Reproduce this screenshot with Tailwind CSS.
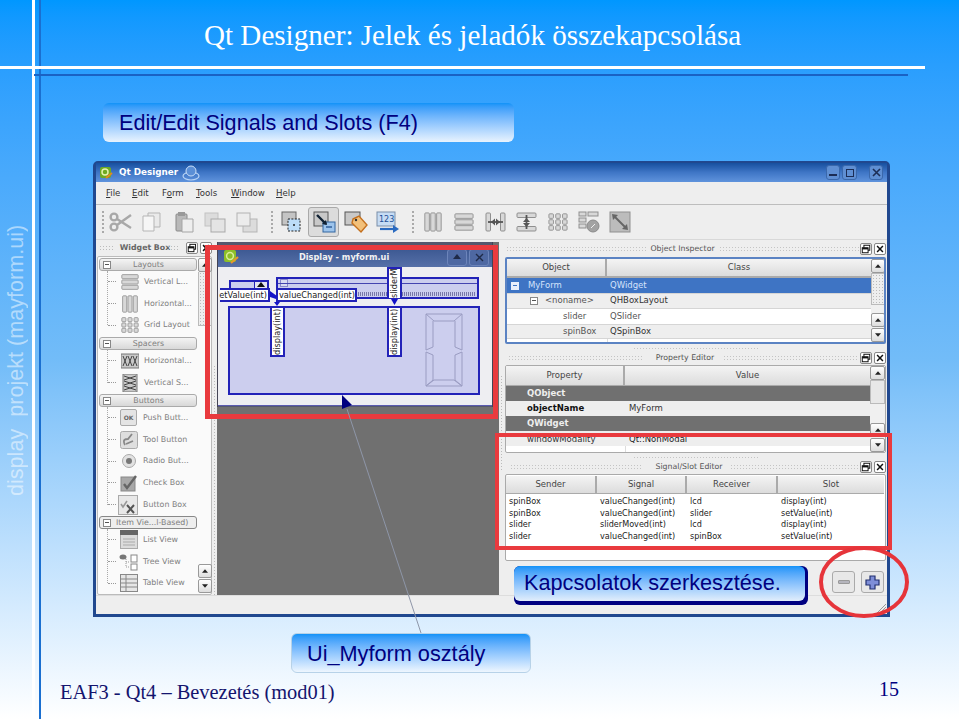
<!DOCTYPE html>
<html lang="hu">
<head>
<meta charset="utf-8">
<title>Qt Designer</title>
<script src="https://cdn.jsdelivr.net/npm/@tailwindcss/browser@4"></script>
</head>
<body class="m-0">
<svg width="0" height="0" class="absolute">
  <defs>
    <symbol id="vl" viewBox="0 0 22 22"><g fill="#d8d8d8" stroke="#8f8f8f"><rect x="1" y="2" width="20" height="5" rx="1"/><rect x="1" y="8.5" width="20" height="5" rx="1"/><rect x="1" y="15" width="20" height="5" rx="1"/></g></symbol>
    <symbol id="hl" viewBox="0 0 22 22"><g fill="#d8d8d8" stroke="#8f8f8f"><rect x="2" y="1" width="5" height="20" rx="1"/><rect x="8.5" y="1" width="5" height="20" rx="1"/><rect x="15" y="1" width="5" height="20" rx="1"/></g></symbol>
    <symbol id="gl" viewBox="0 0 22 22"><g fill="#d8d8d8" stroke="#8f8f8f"><rect x="1" y="2" width="5" height="5" rx="1"/><rect x="8.5" y="2" width="5" height="5" rx="1"/><rect x="16" y="2" width="5" height="5" rx="1"/><rect x="1" y="8.5" width="5" height="5" rx="1"/><rect x="8.5" y="8.5" width="5" height="5" rx="1"/><rect x="16" y="8.5" width="5" height="5" rx="1"/><rect x="1" y="15" width="5" height="5" rx="1"/><rect x="8.5" y="15" width="5" height="5" rx="1"/><rect x="16" y="15" width="5" height="5" rx="1"/></g></symbol>
    <symbol id="up" viewBox="0 0 14 14"><polygon points="3.5,9 10.5,9 7,5" fill="#222"/></symbol>
    <symbol id="dn" viewBox="0 0 14 14"><polygon points="3.5,5 10.5,5 7,9" fill="#222"/></symbol>
    <symbol id="fl" viewBox="0 0 12 12"><rect x="3.5" y="1.5" width="7" height="6" fill="#fff" stroke="#111" stroke-width="1.2"/><rect x="1.5" y="4.5" width="7" height="6" fill="#fff" stroke="#111" stroke-width="1.2"/><rect x="1.5" y="4.5" width="7" height="2" fill="#111"/></symbol>
    <symbol id="xx" viewBox="0 0 12 12"><path d="M2.5 2.5L9.5 9.5M9.5 2.5L2.5 9.5" stroke="#111" stroke-width="1.8"/></symbol>
  </defs>
</svg>

<div class="relative w-[959px] h-[719px] overflow-hidden bg-linear-to-b from-[#0097ff] via-[#72bcf8] via-50% to-[#ffffff] font-['Liberation_Sans',sans-serif]">

  <!-- slide rules -->
  <div class="absolute left-[32px] top-0 w-[3px] h-[719px] bg-white"></div>
  <div class="absolute left-[39px] top-0 w-[2px] h-[719px] bg-[#1a6fd0]"></div>
  <div class="absolute left-0 top-[66px] w-[925px] h-[3px] bg-white"></div>
  <div class="absolute left-[34px] top-[74px] w-[874px] h-[2px] bg-[#1a62c4]"></div>

  <div class="absolute left-[204px] top-[17px] font-['Liberation_Serif',serif] text-[29.100px] leading-[36px] text-white whitespace-nowrap">Qt Designer: Jelek és jeladók összekapcsolása</div>

  <div class="absolute left-[4px] top-[224px] h-[272px] flex items-center [writing-mode:vertical-rl] rotate-180 text-[21.600px] leading-[24px] text-white/50 whitespace-nowrap">display&nbsp; projekt (mayform.ui)</div>

  <div class="absolute left-[103px] top-[103px] w-[411px] h-[39px] rounded-[6px] bg-linear-to-b from-[#0e93f8] to-[#e9f3fd] pl-[16px] pt-[2px] flex items-center text-[21.600px] text-[#000080] whitespace-nowrap">Edit/Edit Signals and Slots (F4)</div>

  <!-- Qt Designer window -->
  <div class="absolute left-[93px] top-[161px] w-[797px] h-[456px] border-x-[3px] border-b-[3px] border-t-[2px] border-[#20488f] rounded-t-[5px] flex flex-col bg-[#eeeeee] font-['DejaVu_Sans',sans-serif] text-[#555]">
    <!-- title bar -->
    <div class="h-[19px] flex items-center bg-linear-to-b from-[#16509f] via-[#3f76c6] to-[#5f93dc] relative shrink-0">
      <svg width="14" height="14" viewBox="0 0 14 14" class="ml-[3px]"><rect x="1" y="1" width="11" height="11" rx="2" fill="#6faa22"/><circle cx="6" cy="6" r="3" fill="none" stroke="#e5f2b0" stroke-width="1.5"/><path d="M7 12L13 7" stroke="#e08a20" stroke-width="2"/></svg>
      <span class="ml-[6px] text-[8.800px] font-bold text-white whitespace-nowrap">Qt Designer</span>
      <svg width="18" height="18" viewBox="0 0 18 18" class="ml-[4px]"><ellipse cx="9" cy="12" rx="8" ry="4" fill="none" stroke="#b9d4f5" stroke-width="1.2"/><circle cx="9" cy="7" r="5" fill="#5b8fd6" stroke="#c9def8"/></svg>
      <div class="ml-auto mr-[4px] flex items-center">
        <div class="w-[14px] h-[15px] rounded-[3px] bg-[#5f8fd3] border border-[#3a68ab] flex items-end justify-center pb-[3px]"><div class="w-[8px] h-[2px] bg-[#1c2d55]"></div></div>
        <div class="ml-[2px] w-[15px] h-[15px] rounded-[3px] bg-[#5f8fd3] border border-[#3a68ab] flex items-center justify-center"><div class="w-[8px] h-[8px] border border-[#1c2d55]"></div></div>
        <div class="ml-[12px] w-[14px] h-[15px] rounded-[3px] bg-[#5f8fd3] border border-[#3a68ab] flex items-center justify-center"><svg width="9" height="9" viewBox="0 0 9 9"><path d="M1 1L8 8M8 1L1 8" stroke="#1c2d55" stroke-width="1.6"/></svg></div>
      </div>
    </div>
    <!-- menu -->
    <div class="h-[23px] flex items-center pl-[10px] pt-[1px] text-[8.600px] text-[#333] border-b border-[#bdbdbd] shrink-0 bg-[#eeeeee]">
      <span class="w-[26px]"><u>F</u>ile</span>
      <span class="w-[30px]"><u>E</u>dit</span>
      <span class="w-[34px]">F<u>o</u>rm</span>
      <span class="w-[35px]"><u>T</u>ools</span>
      <span class="w-[45px]"><u>W</u>indow</span>
      <span><u>H</u>elp</span>
    </div>
    <!-- toolbar -->
    <div class="h-[35px] flex items-center shrink-0 border-b border-[#d8d8d8] relative">
      <div class="ml-[5px] w-[4px] h-[24px] bg-[radial-gradient(#aaa_1px,transparent_1px)] bg-[length:4px_4px]"></div>
      <svg width="24" height="20" viewBox="0 0 24 20" class="ml-[4px]"><g fill="none" stroke="#a8a8a8" stroke-width="2.4"><circle cx="5" cy="5" r="3.4"/><circle cx="5" cy="15" r="3.4"/><path d="M8 7L22 16M8 13L22 3"/></g></svg>
      <svg width="22" height="22" viewBox="0 0 22 22" class="ml-[8px]"><path d="M7 2h12v14h-12z" fill="#eaeaea" stroke="#b5b5b5"/><path d="M2 5h11v15h-11z" fill="#f6f6f6" stroke="#b5b5b5"/></svg>
      <svg width="22" height="22" viewBox="0 0 22 22" class="ml-[10px]"><rect x="3" y="3" width="11" height="17" rx="1" fill="#b9b9b9" stroke="#8a8a8a"/><rect x="5" y="1" width="7" height="4" fill="#999"/><path d="M9 8h11v13h-11z" fill="#eeeeee" stroke="#a5a5a5"/></svg>
      <svg width="22" height="22" viewBox="0 0 22 22" class="ml-[9px]"><rect x="1" y="2" width="13" height="13" fill="#dcdcdc" stroke="#c2c2c2"/><rect x="7" y="8" width="14" height="13" fill="#e4e4e4" stroke="#a9a9a9"/></svg>
      <svg width="22" height="22" viewBox="0 0 22 22" class="ml-[10px]"><rect x="7" y="8" width="14" height="13" fill="#dcdcdc" stroke="#b5b5b5"/><rect x="1" y="2" width="13" height="13" fill="#ececec" stroke="#b2b2b2"/></svg>
      <div class="ml-[12px] w-[4px] h-[24px] bg-[radial-gradient(#aaa_1px,transparent_1px)] bg-[length:4px_4px]"></div>
      <svg width="22" height="22" viewBox="0 0 22 22" class="ml-[7px]"><rect x="1" y="1" width="14" height="13" fill="#c4c4c4" stroke="#666"/><rect x="7" y="8" width="12" height="12" fill="#bcdcf8" stroke="#222" stroke-dasharray="2 1.4"/><circle cx="13" cy="14" r="1" fill="#222"/></svg>
      <div class="ml-[5px] w-[31px] h-[30px] rounded-[3px] border border-[#a9a9a9] bg-[#dcdcdc] flex items-center justify-center">
        <svg width="24" height="24" viewBox="0 0 24 24"><rect x="2" y="2" width="14" height="14" fill="#c8c8c8" stroke="#555"/><rect x="11" y="12" width="12" height="10" fill="#9dc4ec" stroke="#3366a0"/><path d="M14 17h6" stroke="#2a5a96" stroke-width="1.4"/><path d="M5 5L14 14" stroke="#123" stroke-width="2.4"/><polygon points="15,15 10,14 14,10" fill="#123"/></svg>
      </div>
      <svg width="24" height="24" viewBox="0 0 24 24" class="ml-[5px]"><rect x="1" y="2" width="15" height="13" fill="#c8c8c8" stroke="#555"/><path d="M9 9l6-3 8 9-6 7-9-9z" fill="#f2c07a" stroke="#c4701e" stroke-width="1.4"/><circle cx="12" cy="10" r="1.2" fill="#333"/></svg>
      <svg width="24" height="24" viewBox="0 0 24 24" class="ml-[8px]"><rect x="1" y="2" width="18" height="14" fill="#c6dcf4" stroke="#7a8ea8"/><text x="3" y="12" font-size="8" fill="#1e4f96" font-family="DejaVu Sans">123</text><path d="M4 19h14" stroke="#2a6ac0" stroke-width="2.2"/><polygon points="17,15 23,19 17,23" fill="#2a6ac0"/></svg>
      <div class="ml-[11px] w-[4px] h-[24px] bg-[radial-gradient(#aaa_1px,transparent_1px)] bg-[length:4px_4px]"></div>
      <svg width="20" height="20" class="ml-[8px]"><use href="#hl"/></svg>
      <svg width="20" height="20" class="ml-[11px]"><use href="#vl"/></svg>
      <svg width="21" height="20" viewBox="0 0 21 20" class="ml-[11px]"><g fill="#d8d8d8" stroke="#8f8f8f"><rect x="1" y="1" width="4.5" height="18" rx="1"/><rect x="15.5" y="1" width="4.5" height="18" rx="1"/></g><path d="M3 10h15" stroke="#555" stroke-width="1.8"/><polygon points="6,10 10,6.5 10,13.5" fill="#555"/><polygon points="15,10 11,6.5 11,13.5" fill="#555"/></svg>
      <svg width="21" height="20" viewBox="0 0 21 20" class="ml-[10px]"><g fill="#d8d8d8" stroke="#8f8f8f"><rect x="1" y="1" width="19" height="4.5" rx="1"/><rect x="1" y="14.5" width="19" height="4.5" rx="1"/></g><path d="M10.5 3v14" stroke="#555" stroke-width="1.8"/><polygon points="10.5,6 7,10 14,10" fill="#555"/><polygon points="10.5,15 7,11 14,11" fill="#555"/></svg>
      <svg width="20" height="20" class="ml-[11px]"><use href="#gl"/></svg>
      <svg width="22" height="22" viewBox="0 0 22 22" class="ml-[10px]"><g fill="#d8d8d8" stroke="#8f8f8f"><rect x="1" y="1" width="7" height="4"/><rect x="10" y="1" width="10" height="4"/><rect x="1" y="7" width="7" height="4"/><rect x="1" y="13" width="7" height="4"/></g><circle cx="15" cy="15" r="6" fill="#a2a2a2" stroke="#8a8a8a"/><path d="M13 17l4-4" stroke="#eee"/></svg>
      <svg width="22" height="22" viewBox="0 0 22 22" class="ml-[9px]"><rect x="1" y="1" width="20" height="20" fill="#bcbcbc" stroke="#909090"/><path d="M5 5L17 17" stroke="#666" stroke-width="2"/><polygon points="3,3 9,4 4,9" fill="#666"/><polygon points="19,19 13,18 18,13" fill="#666"/></svg>
    </div>

    <!-- body -->
    <div class="flex h-[355px] shrink-0">
      <!-- widget box -->
      <div class="w-[116px] shrink-0 flex flex-col pl-[1px]">
        <div class="h-[16px] flex items-center text-[7.800px] text-[#444] shrink-0">
          <div class="ml-[2px] w-[14px] h-[6px] bg-[radial-gradient(#bbb_1px,transparent_1px)] bg-[length:3px_3px]"></div>
          <span class="ml-[7px] w-[44px] font-bold text-[#666] whitespace-nowrap">Widget Box</span>
          <div class="ml-[3px] w-[14px] h-[6px] bg-[radial-gradient(#bbb_1px,transparent_1px)] bg-[length:3px_3px]"></div>
          <svg width="12" height="12" class="ml-[6px] bg-white border border-[#888] rounded-[2px]"><use href="#fl"/></svg>
          <svg width="12" height="12" class="ml-[2px] bg-white border border-[#888] rounded-[2px]"><use href="#xx"/></svg>
        </div>
        <div class="h-[339px] flex border border-[#bbb] rounded-[2px] bg-[#fafafa] text-[7.900px] text-[#808080] p-[1px]">
          <div class="w-[98px] shrink-0">
            <!-- Layouts -->
            <div class="h-[13px] flex items-center rounded-[3px] border border-[#aaa] bg-linear-to-b from-[#f4f4f4] to-[#d8d8d8]"><span class="ml-[3px] w-[8px] h-[8px] border border-[#888] bg-white flex items-center justify-center"><span class="w-[4px] h-px bg-[#555]"></span></span><span class="flex-1 text-center mr-[10px]">Layouts</span></div>
            <div class="ml-[8px] border-l border-dotted border-[#aaa] h-[54px]">
              <div class="h-[21.7px] flex items-center"><span class="w-[8px] border-t border-dotted border-[#999]"></span><svg width="18" height="18" class="ml-[5px]"><use href="#vl"/></svg><span class="ml-[5px] whitespace-nowrap">Vertical L...</span></div>
              <div class="h-[21.7px] flex items-center"><span class="w-[8px] border-t border-dotted border-[#999]"></span><svg width="18" height="18" class="ml-[5px]"><use href="#hl"/></svg><span class="ml-[5px] whitespace-nowrap">Horizontal...</span></div>
              <div class="h-[21.7px] flex items-center"><span class="w-[8px] border-t border-dotted border-[#999]"></span><svg width="18" height="18" class="ml-[5px]"><use href="#gl"/></svg><span class="ml-[5px] whitespace-nowrap">Grid Layout</span></div>
            </div>
            <div class="h-[12px]"></div>
            <!-- Spacers -->
            <div class="h-[13px] flex items-center rounded-[3px] border border-[#aaa] bg-linear-to-b from-[#f4f4f4] to-[#d8d8d8]"><span class="ml-[3px] w-[8px] h-[8px] border border-[#888] bg-white flex items-center justify-center"><span class="w-[4px] h-px bg-[#555]"></span></span><span class="flex-1 text-center mr-[10px]">Spacers</span></div>
            <div class="ml-[8px] border-l border-dotted border-[#aaa] h-[33px]">
              <div class="h-[21.7px] flex items-center"><span class="w-[8px] border-t border-dotted border-[#999]"></span><svg width="18" height="16" viewBox="0 0 18 16" class="ml-[5px]"><rect x="0" y="1" width="18" height="14" fill="#c8c8c8" stroke="#777"/><path d="M2 3l4 10M6 3L2 13M7 3l4 10M11 3L7 13M12 3l4 10M16 3l-4 10" stroke="#444"/></svg><span class="ml-[5px] whitespace-nowrap">Horizontal...</span></div>
              <div class="h-[21.7px] flex items-center"><span class="w-[8px] border-t border-dotted border-[#999]"></span><svg width="16" height="18" viewBox="0 0 16 18" class="ml-[6px]"><rect x="1" y="0" width="14" height="18" fill="#c8c8c8" stroke="#777"/><path d="M2 2l12 4M14 2L2 6M2 7l12 4M14 7L2 11M2 12l12 4M14 12L2 16" stroke="#444"/></svg><span class="ml-[6px] whitespace-nowrap">Vertical S...</span></div>
            </div>
            <div class="h-[11px]"></div>
            <!-- Buttons -->
            <div class="h-[13px] flex items-center rounded-[3px] border border-[#aaa] bg-linear-to-b from-[#f4f4f4] to-[#d8d8d8]"><span class="ml-[3px] w-[8px] h-[8px] border border-[#888] bg-white flex items-center justify-center"><span class="w-[4px] h-px bg-[#555]"></span></span><span class="flex-1 text-center mr-[10px]">Buttons</span></div>
            <div class="ml-[8px] border-l border-dotted border-[#aaa] h-[98px]">
              <div class="h-[21.7px] flex items-center"><span class="w-[8px] border-t border-dotted border-[#999]"></span><span class="ml-[4px] w-[17px] h-[17px] rounded-[2px] border border-[#aaa] bg-[#e4e4e4] text-[6px] font-bold text-[#666] flex items-center justify-center">OK</span><span class="ml-[6px] whitespace-nowrap">Push Butt...</span></div>
              <div class="h-[21.7px] flex items-center"><span class="w-[8px] border-t border-dotted border-[#999]"></span><svg width="18" height="18" viewBox="0 0 18 18" class="ml-[4px]"><rect x="0.5" y="0.5" width="17" height="17" rx="2" fill="#dedede" stroke="#aaa"/><path d="M5 14C2 8 6 8 8 8L12 3M6 13L13 10" stroke="#888" stroke-width="1.8" fill="none"/></svg><span class="ml-[5px] whitespace-nowrap">Tool Button</span></div>
              <div class="h-[21.7px] flex items-center"><span class="w-[8px] border-t border-dotted border-[#999]"></span><svg width="16" height="16" viewBox="0 0 16 16" class="ml-[5px]"><circle cx="8" cy="8" r="6.5" fill="#e2e2e2" stroke="#aaa"/><circle cx="8" cy="8" r="3" fill="#777"/></svg><span class="ml-[6px] whitespace-nowrap">Radio But...</span></div>
              <div class="h-[21.7px] flex items-center"><span class="w-[8px] border-t border-dotted border-[#999]"></span><svg width="18" height="18" viewBox="0 0 18 18" class="ml-[4px]"><rect x="1" y="3" width="14" height="14" fill="#a8a8a8" stroke="#888"/><path d="M4 10l3 4 9-12" stroke="#666" stroke-width="2.4" fill="none"/></svg><span class="ml-[5px] whitespace-nowrap">Check Box</span></div>
              <div class="h-[21.7px] flex items-center"><span class="w-[8px] border-t border-dotted border-[#999]"></span><svg width="20" height="20" viewBox="0 0 20 20" class="ml-[2px]"><rect x="0.5" y="0.5" width="19" height="19" fill="#e8e8e8" stroke="#aaa"/><path d="M3 9l2 3 4-6" stroke="#999" stroke-width="1.6" fill="none"/><path d="M9 10l7 8M16 10l-7 8" stroke="#555" stroke-width="2"/></svg><span class="ml-[5px] whitespace-nowrap">Button Box</span></div>
            </div>
            <div class="h-[11px]"></div>
            <!-- Item views -->
            <div class="h-[13px] flex items-center rounded-[3px] border border-[#888] bg-[#eeeeee]"><span class="ml-[3px] w-[8px] h-[8px] border border-[#888] bg-white flex items-center justify-center"><span class="w-[4px] h-px bg-[#555]"></span></span><span class="ml-[5px] whitespace-nowrap">Item Vie...l-Based)</span></div>
            <div class="ml-[8px] border-l border-dotted border-[#aaa] h-[54px]">
              <div class="h-[21.7px] flex items-center"><span class="w-[8px] border-t border-dotted border-[#999]"></span><svg width="18" height="19" viewBox="0 0 18 19" class="ml-[4px]"><rect x="0.5" y="0.5" width="17" height="18" fill="#dcdcdc" stroke="#aaa"/><rect x="0" y="0" width="18" height="5" fill="#666"/><path d="M3 9h12M3 12h12M3 15h12" stroke="#aaa"/></svg><span class="ml-[5px] whitespace-nowrap">List View</span></div>
              <div class="h-[21.7px] flex items-center"><span class="w-[8px] border-t border-dotted border-[#999]"></span><svg width="20" height="18" viewBox="0 0 20 18" class="ml-[3px]"><ellipse cx="4" cy="4" rx="3.5" ry="2.5" fill="#777"/><path d="M7 6v8h4M7 9h4" stroke="#999" stroke-dasharray="1 1" fill="none"/><rect x="12" y="2" width="6" height="7" fill="#fff" stroke="#888"/><rect x="12" y="11" width="6" height="6" fill="#fff" stroke="#888"/></svg><span class="ml-[4px] whitespace-nowrap">Tree View</span></div>
              <div class="h-[21.7px] flex items-center"><span class="w-[8px] border-t border-dotted border-[#999]"></span><svg width="18" height="18" viewBox="0 0 18 18" class="ml-[4px]"><rect x="0.5" y="0.5" width="17" height="17" fill="#e6e6e6" stroke="#888"/><path d="M0 5h18M0 9h18M0 13h18M6 0v18" stroke="#888"/></svg><span class="ml-[5px] whitespace-nowrap">Table View</span></div>
            </div>
          </div>
          <!-- scrollbar -->
          <div class="w-[14px] ml-[1px] flex flex-col">
            <div class="w-[14px] h-[14px] rounded-[2px] border border-[#999] bg-linear-to-b from-white to-[#ddd] flex items-center justify-center"><svg width="12" height="12"><use href="#up"/></svg></div>
            <div class="w-[14px] h-[54px] border-x border-b border-[#bbb] bg-[radial-gradient(#bbb_1px,transparent_1px)] bg-[length:3px_3px] bg-[#eee]"></div>
            <div class="flex-1"></div>
            <div class="w-[14px] h-[14px] rounded-[2px] border border-[#999] bg-linear-to-b from-white to-[#ddd] flex items-center justify-center"><svg width="12" height="12"><use href="#up"/></svg></div>
            <div class="mt-[1px] w-[14px] h-[14px] rounded-[2px] border border-[#999] bg-linear-to-b from-white to-[#ddd] flex items-center justify-center"><svg width="12" height="12"><use href="#dn"/></svg></div>
          </div>
        </div>
      </div>
      <!-- splitter -->
      <div class="w-[5px] shrink-0 flex justify-center"><div class="mt-[125px] h-[230px] w-[3px] bg-[radial-gradient(#bbb_1px,transparent_1px)] bg-[length:3px_3px]"></div></div>

      <!-- MDI area -->
      <div class="w-[282px] shrink-0 bg-[#707070] relative mt-[2px]">
        <div class="absolute left-0 top-0 w-[276px] h-[165px] bg-[#55586e] border-x border-[#445] flex flex-col pt-[5px]">
          <div class="h-[20px] shrink-0 flex items-center relative bg-linear-to-b from-[#3a5690] to-[#5670a8]">
            <svg width="16" height="16" viewBox="0 0 16 16" class="ml-[5px]"><rect x="1" y="1" width="12" height="12" rx="2" fill="#8dbf28"/><circle cx="7" cy="7" r="3.4" fill="none" stroke="#d8ee9a" stroke-width="1.5"/><path d="M8 14L15 8" stroke="#e69a2a" stroke-width="2.2"/></svg>
            <span class="absolute left-[81px] text-[8.200px] font-bold text-[#f2f2f2] whitespace-nowrap">Display - myform.ui</span>
            <div class="ml-auto mr-[3px] flex gap-[2px]">
              <div class="w-[20px] h-[17px] rounded-[3px] bg-[#4e68a2] border border-[#6c84ba] flex items-center justify-center"><svg width="8" height="6" viewBox="0 0 8 6"><polygon points="0,5 8,5 4,0" fill="#1f2a48"/></svg></div>
              <div class="w-[20px] h-[17px] rounded-[3px] bg-[#4e68a2] border border-[#6c84ba] flex items-center justify-center"><svg width="9" height="9" viewBox="0 0 9 9"><path d="M1 1L8 8M8 1L1 8" stroke="#1f2a48" stroke-width="1.4"/></svg></div>
            </div>
          </div>
          <!-- form canvas with connection overlay -->
          <div class="h-[139px] shrink-0 bg-[#eeeef2] relative overflow-hidden border-b border-[#5a5ab0] text-[#222] text-[8.200px]">
            <!-- spinbox -->
            <div class="absolute left-[11px] top-[13px] w-[40px] h-[12px] bg-[#ccceee] border-[2px] border-[#2222b8] flex justify-end"><div class="w-[13px] bg-[#e4e4f0] border-l border-[#2222b8] flex justify-center"><svg width="8" height="6" viewBox="0 0 8 6"><polygon points="0,5 8,5 4,0" fill="#111"/></svg></div></div>
            <!-- slider -->
            <div class="absolute left-[58px] top-[10px] w-[203px] h-[22px] bg-[#ccceee] border-[2px] border-[#2222b8]">
              <div class="absolute left-[2px] top-0 w-[8px] h-[8px] bg-[#d8daf2] border border-[#8888cc]"></div>
              <div class="absolute left-[0px] top-[4px] w-[199px] h-px bg-[#4444b0]"></div>
              <div class="absolute left-[80px] top-[13px] w-[118px] h-[4px] bg-[repeating-linear-gradient(90deg,#7878a8_0,#7878a8_1px,transparent_1px,transparent_2px)]"></div>
            </div>
            <!-- central -->
            <div class="absolute left-[10px] top-[39px] w-[252px] h-[89px] bg-[#ccceee] border-[2px] border-[#2222b8]"></div>
            <!-- lcd -->
            <svg width="38" height="76" viewBox="0 0 38 76" class="absolute left-[207px] top-[45px]"><g fill="none" stroke="#9a9cc2"><path d="M1 2H37L29 9H9Z"/><path d="M1 2V38L8 35V9"/><path d="M37 2V38L30 35V9"/><path d="M1 40V74L8 68V43Z"/><path d="M37 40V74L30 68V43Z"/><path d="M1 74H37L29 68H9Z"/></g></svg>
            <!-- labels -->
            <div class="absolute left-[2px] top-[21px] w-[50px] h-[14px] bg-white border-[2px] border-[#2222b8] border-l-0 flex items-center justify-end pr-[1px] whitespace-nowrap">etValue(int)</div>
            <div class="absolute left-[58px] top-[21px] w-[81px] h-[14px] bg-white border-[2px] border-[#2222b8] flex items-center pl-[1px] whitespace-nowrap">valueChanged(int)</div>
            <div class="absolute left-[169px] top-0 w-[15px] h-[31px] bg-white border-[2px] border-t-0 border-[#2222b8] flex items-center justify-start [writing-mode:vertical-rl] rotate-180 overflow-hidden whitespace-nowrap">sliderM</div>
            <div class="absolute left-[52px] top-[39px] w-[15px] h-[51px] bg-white border-[2px] border-[#2222b8] flex items-center justify-center [writing-mode:vertical-rl] rotate-180 whitespace-nowrap">display(int)</div>
            <div class="absolute left-[169px] top-[39px] w-[15px] h-[51px] bg-white border-[2px] border-[#2222b8] flex items-center justify-center [writing-mode:vertical-rl] rotate-180 whitespace-nowrap">display(int)</div>
            <!-- connection arrows -->
            <svg width="276" height="60" viewBox="0 0 276 60" class="absolute left-0 top-0">
              <polygon points="52,24 59,29 58,32 52,30" fill="#1414c8"/>
              <polygon points="56,35 62,35 59,39" fill="#1414c8"/>
              <polygon points="173,32 180,32 176.500,38" fill="#1414c8"/>
            </svg>
          </div>
        </div>
      </div>
      <!-- splitter -->
      <div class="w-[5px] shrink-0 flex justify-center"><div class="mt-[135px] h-[95px] w-[3px] bg-[radial-gradient(#bbb_1px,transparent_1px)] bg-[length:3px_3px]"></div></div>

      <!-- right docks -->
      <div class="w-[383px] shrink-0 pl-[1px] pr-[1px] flex flex-col text-[8.500px]">
        <!-- Object inspector -->
        <div class="h-[17px] flex items-center shrink-0 text-[#555]">
          <div class="ml-[1px] w-[140px] h-[5px] bg-[radial-gradient(#c4c4c4_1px,transparent_1px)] bg-[length:3px_3px]"></div>
          <span class="w-[67px] text-center ml-[3px] text-[7.800px] whitespace-nowrap">Object Inspector</span>
          <div class="ml-[3px] w-[140px] h-[5px] bg-[radial-gradient(#c4c4c4_1px,transparent_1px)] bg-[length:3px_3px]"></div>
          <svg width="12" height="12" class="ml-auto bg-white border border-[#888] rounded-[2px]"><use href="#fl"/></svg>
          <svg width="12" height="12" class="ml-[2px] bg-white border border-[#888] rounded-[2px]"><use href="#xx"/></svg>
        </div>
        <div class="h-[87px] shrink-0 flex border-[2px] border-[#5b83c3] rounded-[2px] bg-white overflow-hidden">
          <div class="w-[364px] shrink-0 flex flex-col">
            <div class="h-[19px] flex shrink-0 text-[#444]">
              <div class="w-[100px] bg-linear-to-b from-[#f4f4f4] to-[#dcdcdc] border-r-[2px] border-b-[2px] border-[#aaa] flex items-center justify-center">Object</div>
              <div class="flex-1 bg-linear-to-b from-[#f4f4f4] to-[#dcdcdc] border-b-[2px] border-[#aaa] flex items-center justify-center">Class</div>
            </div>
            <div class="h-[15px] flex items-center bg-[#3e74c4] text-[#d5e3fb] shrink-0"><span class="ml-[4px] w-[8px] h-[8px] bg-[#e8eefb] flex items-center justify-center"><span class="w-[4px] h-px bg-[#3e74c4]"></span></span><span class="ml-[9px] w-[82px]">MyForm</span><span>QWidget</span></div>
            <div class="h-[15.500px] flex items-center bg-[#eeeeee] border-y border-[#d5d5d5] shrink-0"><span class="ml-[23px] w-[8px] h-[8px] border border-[#888] bg-white flex items-center justify-center"><span class="w-[4px] h-px bg-[#555]"></span></span><span class="ml-[7px] w-[65px]">&lt;noname&gt;</span><span class="text-[#333]">QHBoxLayout</span></div>
            <div class="h-[15px] flex items-center bg-white shrink-0"><span class="ml-[56px] w-[47px]">slider</span><span>QSlider</span></div>
            <div class="h-[15.500px] flex items-center bg-[#eeeeee] border-y border-[#d5d5d5] shrink-0"><span class="ml-[56px] w-[47px]">spinBox</span><span class="text-[#333]">QSpinBox</span></div>
            <div class="flex-1 ml-[100px] border-l border-[#ddd]"></div>
          </div>
          <div class="flex-1 flex flex-col bg-[#f0f0f0]">
            <div class="h-[14px] rounded-[2px] border border-[#999] bg-linear-to-b from-white to-[#ddd] flex items-center justify-center"><svg width="12" height="12"><use href="#up"/></svg></div>
            <div class="h-[32px] border border-[#bbb] bg-[radial-gradient(#bbb_1px,transparent_1px)] bg-[length:3px_3px] bg-[#eee]"></div>
            <div class="flex-1"></div>
            <div class="h-[14px] rounded-[2px] border border-[#999] bg-linear-to-b from-white to-[#ddd] flex items-center justify-center"><svg width="12" height="12"><use href="#up"/></svg></div>
            <div class="h-[14px] mt-[1px] rounded-[2px] border border-[#999] bg-linear-to-b from-white to-[#ddd] flex items-center justify-center"><svg width="12" height="12"><use href="#dn"/></svg></div>
          </div>
        </div>
        <div class="h-[6px] shrink-0 flex justify-center items-end"><div class="w-[125px] h-[3px] bg-[radial-gradient(#c4c4c4_1px,transparent_1px)] bg-[length:3px_3px]"></div></div>
        <!-- Property editor -->
        <div class="h-[15px] flex items-center shrink-0 text-[#555]">
          <div class="ml-[3px] w-[136px] h-[5px] bg-[radial-gradient(#c4c4c4_1px,transparent_1px)] bg-[length:3px_3px]"></div>
          <span class="w-[64px] text-center ml-[9px] text-[7.800px] whitespace-nowrap">Property Editor</span>
          <div class="ml-[6px] w-[135px] h-[5px] bg-[radial-gradient(#c4c4c4_1px,transparent_1px)] bg-[length:3px_3px]"></div>
          <svg width="12" height="12" class="ml-auto bg-white border border-[#888] rounded-[2px]"><use href="#fl"/></svg>
          <svg width="12" height="12" class="ml-[2px] bg-white border border-[#888] rounded-[2px]"><use href="#xx"/></svg>
        </div>
        <div class="h-[88px] shrink-0 flex border border-[#aaa] rounded-[2px] bg-white overflow-hidden">
          <div class="w-[364px] shrink-0 flex flex-col">
            <div class="h-[20px] flex shrink-0 text-[#444]">
              <div class="w-[119px] bg-linear-to-b from-[#f4f4f4] to-[#dcdcdc] border-r-[2px] border-b border-[#aaa] flex items-center justify-center">Property</div>
              <div class="flex-1 bg-linear-to-b from-[#f4f4f4] to-[#dcdcdc] border-b border-[#aaa] flex items-center justify-center">Value</div>
            </div>
            <div class="h-[15px] flex items-center bg-[#707070] text-[#eee] font-bold shrink-0"><span class="ml-[21px]">QObject</span></div>
            <div class="h-[15px] flex items-center bg-[#eeeeee] shrink-0"><span class="ml-[21px] w-[98px] font-bold text-[#111]">objectName</span><span class="text-[#333] ml-[4px]">MyForm</span></div>
            <div class="h-[15px] flex items-center bg-[#707070] text-[#eee] font-bold shrink-0"><span class="ml-[21px]">QWidget</span></div>
            <div class="h-[15px] flex items-center bg-[#eeeeee] shrink-0 pt-[2px]"><span class="ml-[21px] w-[98px] text-[#333]">windowModality</span><span class="text-[#222] ml-[4px]">Qt::NonModal</span></div>
            <div class="flex-1 ml-[119px] border-l border-[#ddd]"></div>
          </div>
          <div class="flex-1 flex flex-col bg-[#f0f0f0]">
            <div class="h-[14px] rounded-[2px] border border-[#999] bg-linear-to-b from-white to-[#ddd] flex items-center justify-center"><svg width="12" height="12"><use href="#up"/></svg></div>
            <div class="h-[24px] border border-[#bbb] bg-[#e8e8e8]"></div>
            <div class="flex-1"></div>
            <div class="h-[14px] rounded-[2px] border border-[#999] bg-linear-to-b from-white to-[#ddd] flex items-center justify-center"><svg width="12" height="12"><use href="#up"/></svg></div>
            <div class="h-[14px] mt-[1px] rounded-[2px] border border-[#999] bg-linear-to-b from-white to-[#ddd] flex items-center justify-center"><svg width="12" height="12"><use href="#dn"/></svg></div>
          </div>
        </div>
        <div class="h-[6px] shrink-0 flex justify-center items-end"><div class="w-[125px] h-[3px] bg-[radial-gradient(#c4c4c4_1px,transparent_1px)] bg-[length:3px_3px]"></div></div>
        <!-- Signal/Slot editor -->
        <div class="h-[15px] flex items-center shrink-0 text-[#555]">
          <div class="ml-[5px] w-[132px] h-[5px] bg-[radial-gradient(#c4c4c4_1px,transparent_1px)] bg-[length:3px_3px]"></div>
          <span class="w-[72px] text-center ml-[11px] text-[7.800px] whitespace-nowrap">Signal/Slot Editor</span>
          <div class="ml-[5px] w-[128px] h-[5px] bg-[radial-gradient(#c4c4c4_1px,transparent_1px)] bg-[length:3px_3px]"></div>
          <svg width="12" height="12" class="ml-auto bg-white border border-[#888] rounded-[2px]"><use href="#fl"/></svg>
          <svg width="12" height="12" class="ml-[2px] bg-white border border-[#888] rounded-[2px]"><use href="#xx"/></svg>
        </div>
        <div class="h-[87px] shrink-0 flex flex-col border border-[#aaa] rounded-[2px] bg-white overflow-hidden pt-[1px] pr-[1px]">
          <div class="grid grid-cols-[91px_90px_91px_1fr] h-[18px] shrink-0 text-[#444] border-b border-[#aaa]">
            <div class="bg-linear-to-b from-[#f4f4f4] to-[#dcdcdc] border-r-[2px] border-[#aaa] flex items-center justify-center">Sender</div>
            <div class="bg-linear-to-b from-[#f4f4f4] to-[#dcdcdc] border-r-[2px] border-[#aaa] flex items-center justify-center">Signal</div>
            <div class="bg-linear-to-b from-[#f4f4f4] to-[#dcdcdc] border-r-[2px] border-[#aaa] flex items-center justify-center">Receiver</div>
            <div class="bg-linear-to-b from-[#f4f4f4] to-[#dcdcdc] flex items-center justify-center">Slot</div>
          </div>
          <div class="grid grid-cols-[91px_90px_91px_1fr] auto-rows-[11.700px] pt-[1px] pl-[3px] text-[8.100px] text-[#222] leading-[12px]">
            <span>spinBox</span><span>valueChanged(int)</span><span>lcd</span><span>display(int)</span>
            <span>spinBox</span><span>valueChanged(int)</span><span>slider</span><span>setValue(int)</span>
            <span>slider</span><span>sliderMoved(int)</span><span>lcd</span><span>display(int)</span>
            <span>slider</span><span>valueChanged(int)</span><span>spinBox</span><span>setValue(int)</span>
          </div>
        </div>
        <div class="h-[34px] shrink-0 flex justify-end gap-[6px] pt-[10px] pr-[2px]">
          <div class="w-[23px] h-[22px] rounded-[3px] border border-[#aaa] bg-[#e8e8e8] flex items-center justify-center"><div class="w-[12px] h-[4px] rounded-[1px] bg-[#b5b5bd] border border-[#999]"></div></div>
          <div class="w-[23px] h-[22px] rounded-[3px] border border-[#aaa] bg-[#e8e8e8] flex items-center justify-center"><svg width="15" height="15" viewBox="0 0 15 15"><path d="M5 1h5v4h4v5h-4v4H5v-4H1V5h4z" fill="#7e8ed8" stroke="#223070" stroke-width="1.2"/></svg></div>
        </div>
      </div>
    </div>
    <!-- status bar -->
    <div class="flex-1 relative border-t border-[#ddd] bg-[#eeeeee]">
      <svg width="11" height="11" viewBox="0 0 11 11" class="absolute right-0 bottom-0"><path d="M10 1L1 10M10 4L4 10M10 7L7 10" stroke="#999"/></svg>
    </div>
  </div>

  <!-- overlays -->
  <div class="absolute left-[205px] top-[245px] w-[293px] h-[174px] border-[5px] border-[#e93a3e]"></div>
  <div class="absolute left-[495px] top-[433px] w-[397px] h-[117px] border-[4px] border-[#e93a3e]"></div>
  <svg width="92" height="74" viewBox="0 0 92 74" class="absolute left-[819px] top-[545px]"><ellipse cx="45" cy="37" rx="43" ry="34" fill="none" stroke="#e6343a" stroke-width="4"/></svg>

  <div class="absolute left-[514px] top-[566px] w-[294px] h-[39px] rounded-[6px] bg-[#000080] pr-[3px] pb-[4px]">
    <div class="h-full rounded-[6px] bg-linear-to-b from-[#0e93f8] to-[#e2eefb] pl-[10px] flex items-center text-[21.700px] text-[#000080] whitespace-nowrap">Kapcsolatok szerkesztése.</div>
  </div>

  <svg width="959" height="719" viewBox="0 0 959 719" class="absolute left-0 top-0 pointer-events-none">
    <path d="M347 409L421 633" stroke="#8e96a8" stroke-width="1"/>
    <polygon points="342,395 352,405 342,409" fill="#000080"/>
  </svg>

  <div class="absolute left-[291px] top-[633px] w-[240px] h-[40px] rounded-[6px] border border-[#b7d2e8] bg-linear-to-b from-[#0e93f8] to-[#eef6fe] pl-[15px] pt-[2px] flex items-center text-[21.700px] text-[#000080] whitespace-nowrap">Ui_Myform osztály</div>

  <div class="absolute left-[60px] top-[680px] font-['Liberation_Serif',serif] text-[20.400px] leading-[24px] text-[#14146e] whitespace-nowrap">EAF3 - Qt4 – Bevezetés (mod01)</div>
  <div class="absolute left-[879px] top-[677px] font-['Liberation_Serif',serif] text-[20px] leading-[24px] text-[#000080]">15</div>
</div>
</body>
</html>
